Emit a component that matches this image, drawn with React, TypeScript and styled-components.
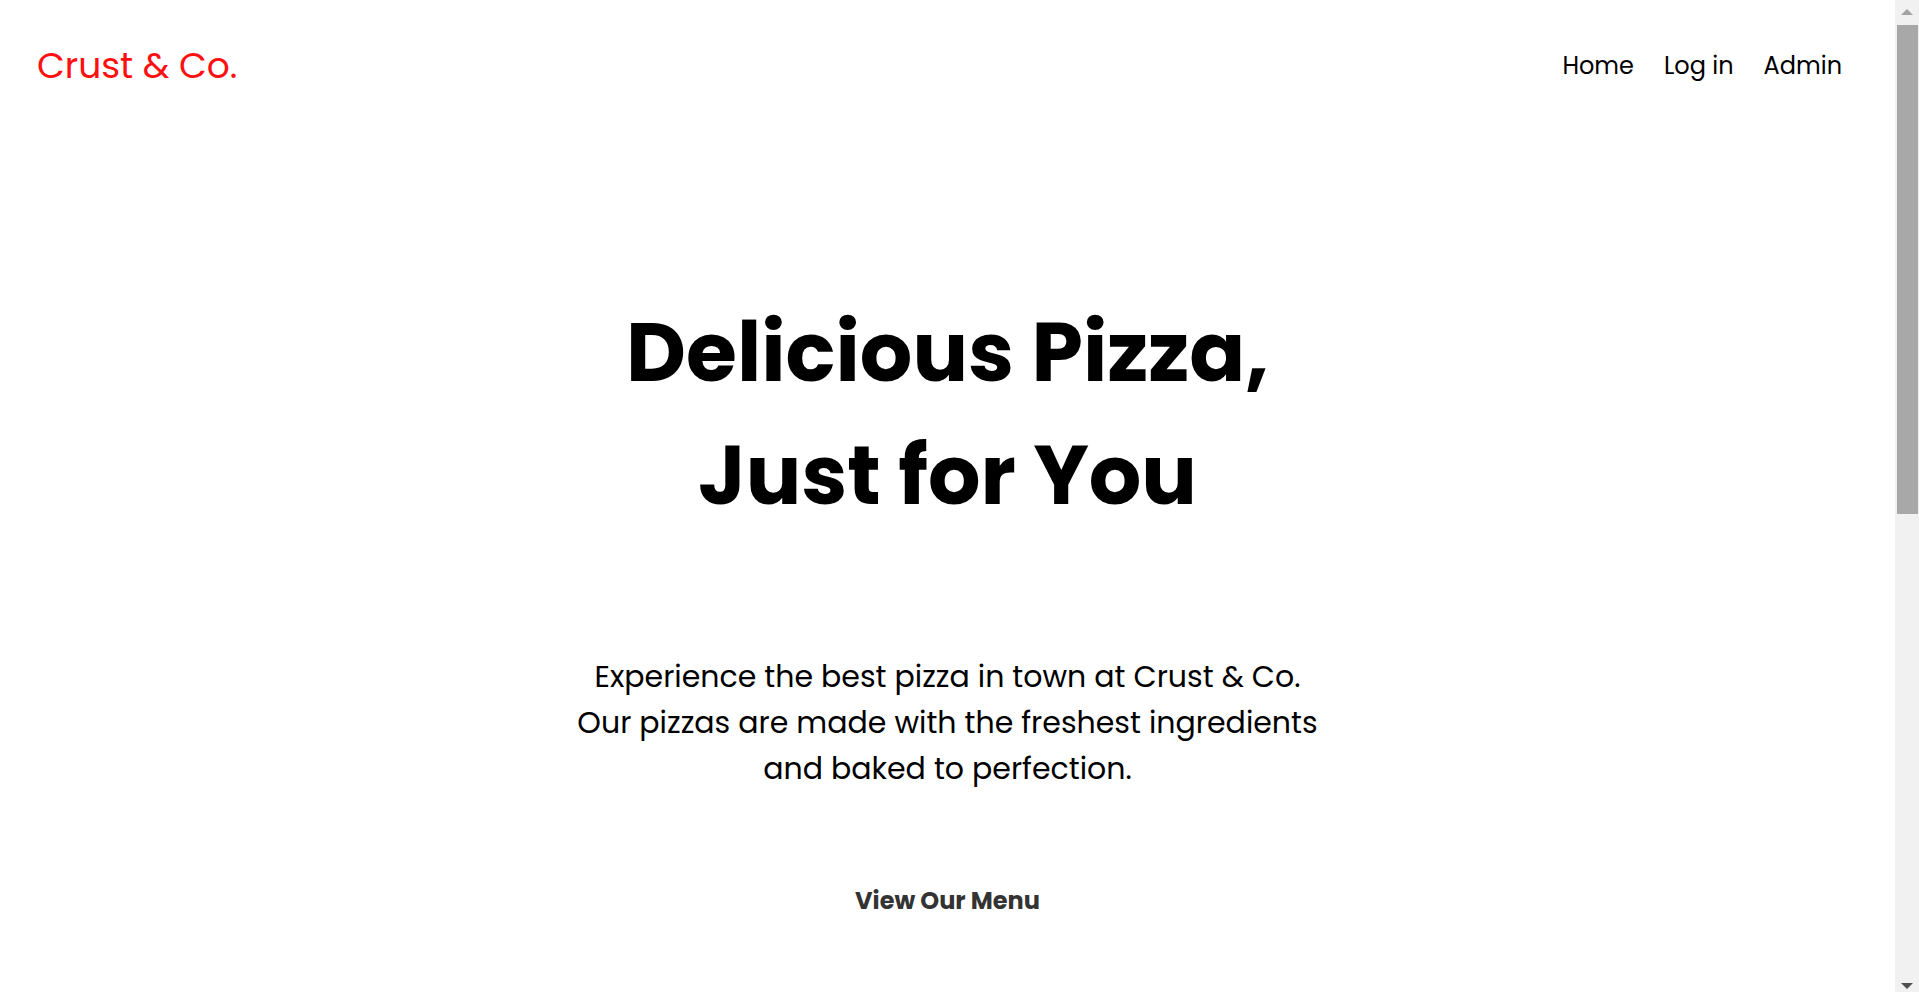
import React from "react";
import styled, { createGlobalStyle } from "styled-components";

const GlobalStyle = createGlobalStyle`
  html, body {
    margin: 0;
    padding: 0;
    background: #ffffff;
  }
  body {
    font-family: Poppins, Inter, "Noto Sans", sans-serif;
    color: #000000;
  }
  * { box-sizing: border-box; }
`;

const Page = styled.div`
  min-height: 1915px;
  margin-right: 24px;
  display: flex;
  flex-direction: column;
`;

const Header = styled.header`
  height: 131px;
  display: flex;
  align-items: center;
  justify-content: space-between;
  padding: 0 53px 0 37px;
`;

const Logo = styled.a`
  font-size: 36px;
  font-weight: 400;
  color: #ff1010;
  text-decoration: none;
`;

const Nav = styled.nav`
  display: flex;
  align-items: center;
  gap: 30px;
`;

const NavLink = styled.a`
  font-size: 24px;
  font-weight: 400;
  color: #000000;
  text-decoration: none;
`;

const Hero = styled.section`
  display: flex;
  flex-direction: column;
  align-items: center;
  text-align: center;
`;

const Title = styled.h1`
  margin: 160px 0 0;
  font-size: 82.5px;
  font-weight: 700;
  line-height: 123px;
`;

const Lead = styled.p`
  margin: 117px 0 0;
  font-size: 30px;
  font-weight: 400;
  line-height: 46px;
`;

const MenuButton = styled.button`
  margin-top: 83px;
  border: none;
  background: transparent;
  font-family: inherit;
  font-size: 24px;
  font-weight: 700;
  color: #333333;
  cursor: pointer;
  padding: 8px 16px;
`;

/* Browser scrollbar as seen in the screenshot (overlay on the right edge) */
const ScrollBar = styled.div`
  position: fixed;
  top: 0;
  right: 0;
  width: 24px;
  height: 100vh;
  background: #f1f1f1;
  display: flex;
  flex-direction: column;
`;

const ArrowBox = styled.div`
  height: 24px;
  flex: none;
  display: flex;
  align-items: center;
  justify-content: center;
`;

const Arrow = styled.div<{ $down?: boolean; $color: string }>`
  width: 0;
  height: 0;
  border-left: 6px solid transparent;
  border-right: 6px solid transparent;
  ${(p) =>
    p.$down
      ? `border-top: 6px solid ${p.$color}; margin-top: 12px;`
      : `border-bottom: 6px solid ${p.$color}; margin-bottom: 1px;`}
`;

const Track = styled.div`
  flex: 1;
  padding: 1px 1px 0 2px;
`;

const Thumb = styled.div`
  height: 489px;
  background: #a8a8a8;
`;

export default function App() {
  return (
    <>
      <GlobalStyle />
      <Page>
        <Header>
          <Logo href="#">Crust &amp; Co.</Logo>
          <Nav>
            <NavLink href="#">Home</NavLink>
            <NavLink href="#">Log in</NavLink>
            <NavLink href="#">Admin</NavLink>
          </Nav>
        </Header>
        <Hero>
          <Title>
            Delicious Pizza,
            <br />
            Just for You
          </Title>
          <Lead>
            Experience the best pizza in town at Crust &amp; Co.
            <br />
            Our pizzas are made with the freshest ingredients
            <br />
            and baked to perfection.
          </Lead>
          <MenuButton>View Our Menu</MenuButton>
        </Hero>
      </Page>
      <ScrollBar aria-hidden="true">
        <ArrowBox>
          <Arrow $color="#a3a3a3" />
        </ArrowBox>
        <Track>
          <Thumb />
        </Track>
        <ArrowBox>
          <Arrow $down $color="#505050" />
        </ArrowBox>
      </ScrollBar>
    </>
  );
}
